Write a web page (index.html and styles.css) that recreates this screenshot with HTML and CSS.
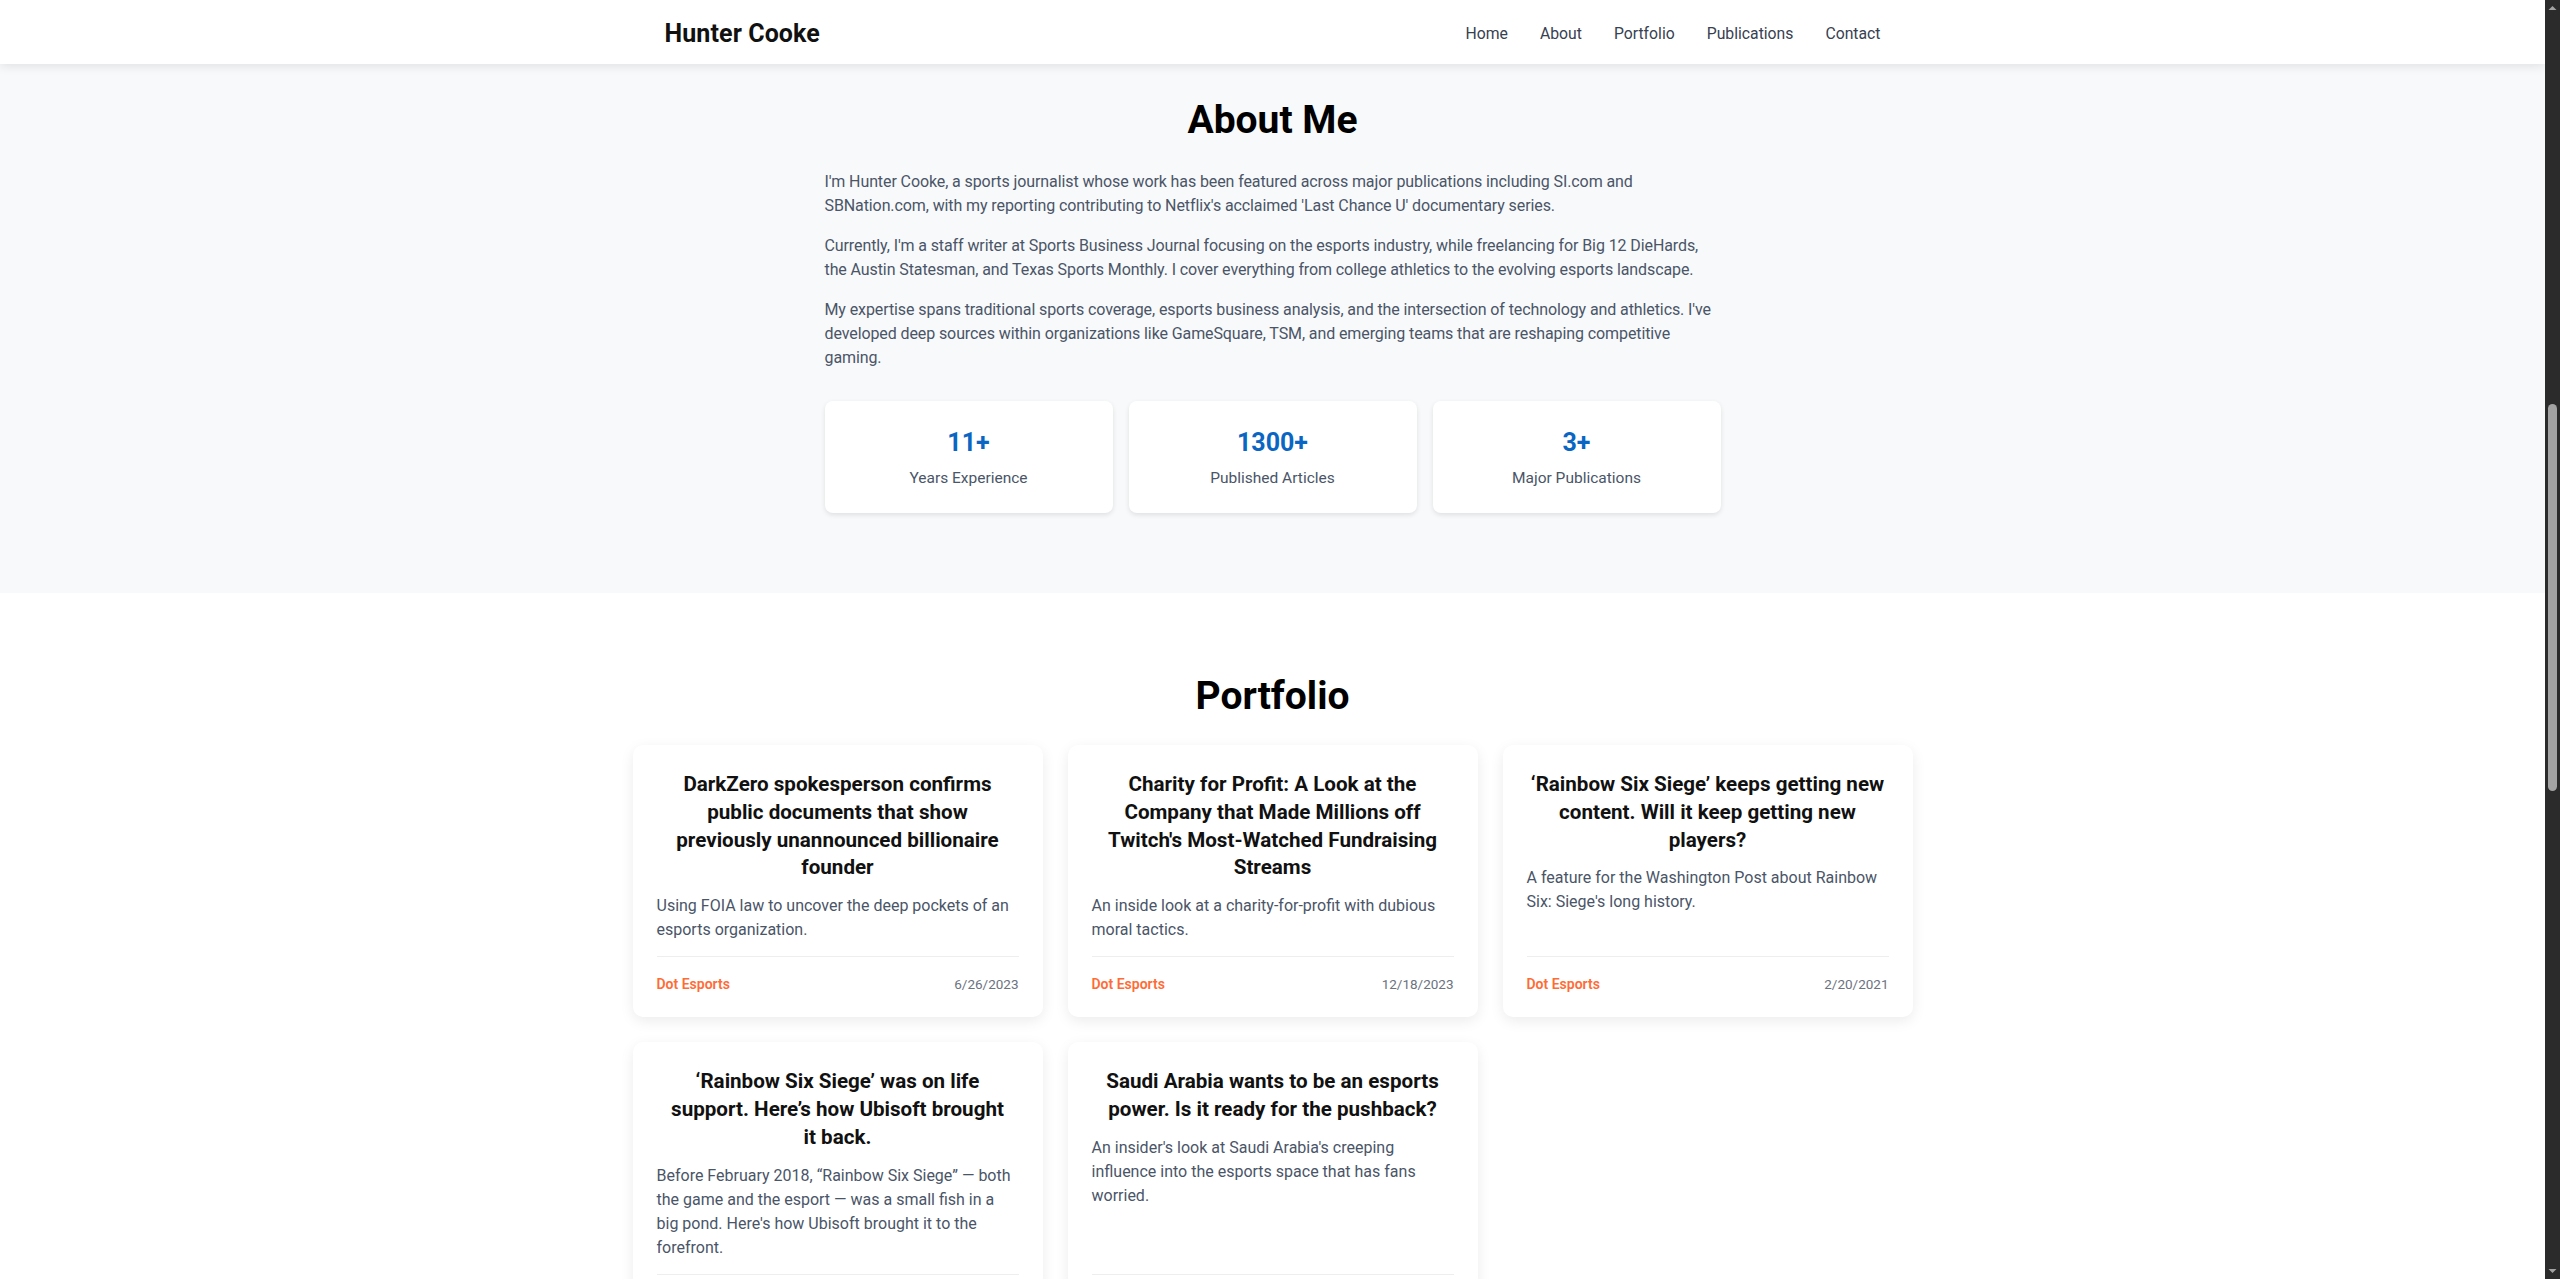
FILE: index.html
```html
<!DOCTYPE html>
<html lang="en">
<head>
<meta charset="utf-8">
<title>Hunter Cooke</title>
<link rel="stylesheet" href="styles.css">
</head>
<body>
<div class="page">
  <header class="site-header">
    <div class="nav-container">
      <a class="brand" href="#">Hunter Cooke</a>
      <nav class="nav-links">
        <a href="#">Home</a>
        <a href="#">About</a>
        <a href="#">Portfolio</a>
        <a href="#">Publications</a>
        <a href="#">Contact</a>
      </nav>
    </div>
  </header>

  <section class="about">
    <div class="about-container">
      <h2 class="section-title">About Me</h2>
      <p>I'm Hunter Cooke, a sports journalist whose work has been featured across major publications including SI.com and<br>SBNation.com, with my reporting contributing to Netflix's acclaimed 'Last Chance U' documentary series.</p>
      <p>Currently, I'm a staff writer at Sports Business Journal focusing on the esports industry, while freelancing for Big 12 DieHards,<br>the Austin Statesman, and Texas Sports Monthly. I cover everything from college athletics to the evolving esports landscape.</p>
      <p>My expertise spans traditional sports coverage, esports business analysis, and the intersection of technology and athletics. I've<br>developed deep sources within organizations like GameSquare, TSM, and emerging teams that are reshaping competitive<br>gaming.</p>
      <div class="stats">
        <div class="stat-card"><div class="stat-number">11+</div><div class="stat-label">Years Experience</div></div>
        <div class="stat-card"><div class="stat-number">1300+</div><div class="stat-label">Published Articles</div></div>
        <div class="stat-card"><div class="stat-number">3+</div><div class="stat-label">Major Publications</div></div>
      </div>
    </div>
  </section>

  <section class="portfolio">
    <h2 class="section-title">Portfolio</h2>
    <div class="cards">
      <article class="card">
        <h3 class="card-title">DarkZero spokesperson confirms<br>public documents that show<br>previously unannounced billionaire<br>founder</h3>
        <p class="card-desc">Using FOIA law to uncover the deep pockets of an<br>esports organization.</p>
        <div class="card-footer"><span class="source">Dot Esports</span><span class="date">6/26/2023</span></div>
      </article>
      <article class="card">
        <h3 class="card-title">Charity for Profit: A Look at the<br>Company that Made Millions off<br>Twitch's Most-Watched Fundraising<br>Streams</h3>
        <p class="card-desc">An inside look at a charity-for-profit with dubious<br>moral tactics.</p>
        <div class="card-footer"><span class="source">Dot Esports</span><span class="date">12/18/2023</span></div>
      </article>
      <article class="card">
        <h3 class="card-title">‘Rainbow Six Siege’ keeps getting new<br>content. Will it keep getting new<br>players?</h3>
        <p class="card-desc">A feature for the Washington Post about Rainbow<br>Six: Siege's long history.</p>
        <div class="card-footer"><span class="source">Dot Esports</span><span class="date">2/20/2021</span></div>
      </article>
      <article class="card">
        <h3 class="card-title">‘Rainbow Six Siege’ was on life<br>support. Here’s how Ubisoft brought<br>it back.</h3>
        <p class="card-desc">Before February 2018, “Rainbow Six Siege” — both<br>the game and the esport — was a small fish in a<br>big pond. Here's how Ubisoft brought it to the<br>forefront.</p>
        <div class="card-footer"><span class="source">Washington Post</span><span class="date">2/6/2023</span></div>
      </article>
      <article class="card">
        <h3 class="card-title">Saudi Arabia wants to be an esports<br>power. Is it ready for the pushback?</h3>
        <p class="card-desc">An insider's look at Saudi Arabia's creeping<br>influence into the esports space that has fans<br>worried.</p>
        <div class="card-footer"><span class="source">Washington Post</span><span class="date">3/3/2023</span></div>
      </article>
    </div>
  </section>
</div>

<div class="scrollbar" aria-hidden="true">
  <svg class="sb-arrow" width="15" height="15" viewBox="0 0 15 15"><polygon points="3.5,10 7.5,6 11.5,10" fill="#a3a3a3"/></svg>
  <div class="sb-track"><div class="sb-thumb"></div></div>
  <svg class="sb-arrow" width="15" height="15" viewBox="0 0 15 15"><polygon points="3.5,5 7.5,9 11.5,5" fill="#a3a3a3"/></svg>
</div>
</body>
</html>
```
FILE: styles.css
```css
* { box-sizing: border-box; }

html, body {
  margin: 0;
  height: 100%;
  overflow: hidden;
}

body {
  display: flex;
  font-family: Roboto, "Liberation Sans", Arial, sans-serif;
  color: #1a1a1a;
  background: #ffffff;
}

.page {
  flex: 1;
  min-width: 0;
  height: 100vh;
  overflow: hidden;
  display: flex;
  flex-direction: column;
}

/* Header */
.site-header {
  flex: none;
  height: 64px;
  background: #ffffff;
  box-shadow: 0 2px 10px rgba(0, 0, 0, 0.1);
  position: relative;
  z-index: 2;
}

.nav-container {
  max-width: 1280px;
  height: 100%;
  margin: 0 auto;
  padding: 2px 32px 0;
  display: flex;
  align-items: center;
  justify-content: space-between;
}

.brand {
  font-size: 25px;
  font-weight: 700;
  color: #111111;
  text-decoration: none;
  letter-spacing: 0.1px;
}

.nav-links {
  display: flex;
  gap: 32px;
}

.nav-links a {
  font-size: 15.75px;
  color: #374151;
  text-decoration: none;
}

/* Section titles */
.section-title {
  margin: 0 0 25px;
  font-size: 39px;
  line-height: 47px;
  font-weight: 700;
  color: #000000;
  text-align: center;
}

/* About */
.about {
  flex: none;
  background: #f8f9fa;
  padding: 33px 0 80px;
}

.about .section-title {
  margin-bottom: 26px;
}

.about-container {
  max-width: 896px;
  margin: 0 auto;
}

.about-container p {
  margin: 0 0 16px;
  font-size: 16px;
  line-height: 24px;
  color: #4a5568;
  letter-spacing: -0.1px;
}

.about-container p:last-of-type {
  margin-bottom: 0;
}

.stats {
  margin-top: 31px;
  display: grid;
  grid-template-columns: repeat(3, 1fr);
  gap: 16px;
}

.stat-card {
  background: #ffffff;
  border-radius: 8px;
  box-shadow: 0 2px 5px rgba(0, 0, 0, 0.1);
  padding: 24px;
  text-align: center;
}

.stat-number {
  font-size: 25px;
  line-height: 36px;
  font-weight: 700;
  color: #0b66c3;
}

.stat-label {
  margin-top: 5.5px;
  font-size: 15.5px;
  line-height: 22.5px;
  color: #4a5568;
}

/* Portfolio */
.portfolio {
  flex: none;
  background: #ffffff;
  padding: 80px 0;
}

.cards {
  max-width: 1280px;
  margin: 0 auto;
  display: grid;
  grid-template-columns: repeat(3, 1fr);
  gap: 25px;
}

.card {
  background: #ffffff;
  border-radius: 10px;
  box-shadow: 0 4px 14px rgba(0, 0, 0, 0.08);
  padding: 26px 24px 23px;
  display: flex;
  flex-direction: column;
}

.card-title {
  margin: 0 0 12px;
  font-size: 20.6px;
  line-height: 27.8px;
  font-weight: 700;
  color: #111111;
  text-align: center;
}

.card-desc {
  margin: 0 0 14px;
  font-size: 16px;
  line-height: 24px;
  color: #4a5568;
}

.card-footer {
  margin-top: auto;
  padding-top: 17px;
  border-top: 1px solid #eeeeee;
  display: flex;
  justify-content: space-between;
  align-items: center;
  font-size: 13.5px;
  line-height: 20px;
}

.source {
  color: #ff6b35;
  font-weight: 600;
  font-size: 14px;
}

.date {
  color: #6b7280;
}

/* Scrollbar (browser chrome in the capture) */
.scrollbar {
  flex: none;
  width: 15px;
  height: 100vh;
  background: #2b2b2b;
  display: flex;
  flex-direction: column;
}

.sb-arrow {
  flex: none;
  display: block;
}

.sb-track {
  flex: 1;
  display: flex;
  flex-direction: column;
  align-items: center;
}

.sb-thumb {
  margin-top: 389px;
  width: 9px;
  height: 387px;
  border-radius: 5px;
  background: #a3a3a3;
}
```
